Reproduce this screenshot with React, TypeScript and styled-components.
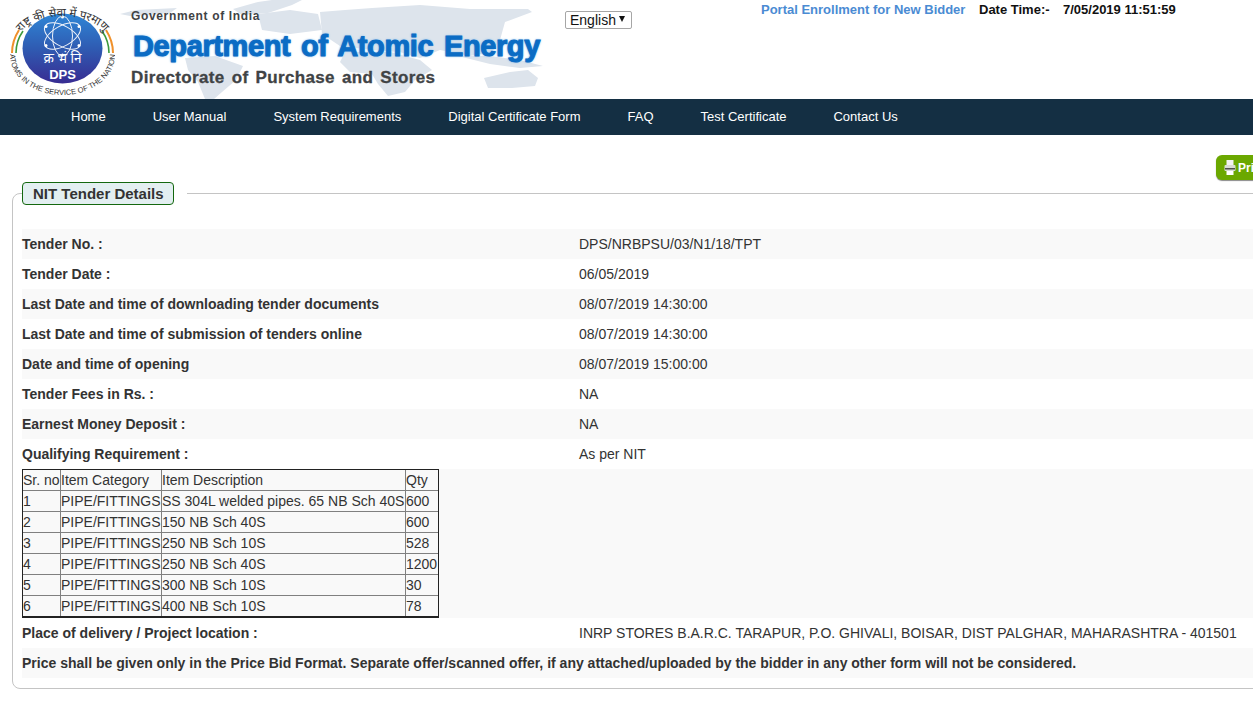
import * as React from "react";
import styled, { createGlobalStyle } from "styled-components";

const GlobalStyle = createGlobalStyle`
	html, body {
		margin: 0;
		padding: 0;
		background: #fff;
		overflow: hidden;
	}
	body {
		font-family: "Liberation Sans", Arial, sans-serif;
		font-size: 14px;
		color: #333;
	}
`;

const Page = styled.div`
	width: 1253px;
	height: 702px;
	overflow: hidden;
`;

const Header = styled.header`
	position: relative;
	display: flex;
	height: 99px;
	overflow: hidden;
`;

const MapArt = styled.svg`
	position: absolute;
	left: 110px;
	top: 0;
	width: 440px;
	height: 99px;
`;

const LogoBox = styled.div`
	position: relative;
	flex: 0 0 131px;
	padding: 3px 0 0 10px;
	box-sizing: border-box;
`;

const Brand = styled.div`
	position: relative;
	flex: 0 0 434px;
	padding-top: 9px;
	box-sizing: border-box;
`;

const GovLine = styled.div`
	font-size: 12px;
	line-height: 15px;
	font-weight: 700;
	letter-spacing: 0.65px;
	color: #3f4345;
`;

const DeptLine = styled.div`
	margin: 4px 0 0 2px;
	font-size: 29px;
	line-height: 36px;
	font-weight: 700;
	letter-spacing: -0.38px;
	word-spacing: 3px;
	white-space: nowrap;
	color: #0b6cc4;
	-webkit-text-stroke: 1px #0b6cc4;
	text-shadow: 0 0 1px #7fb8ea, 0 0 2px #7fb8ea, 0 0 3px #9ccbf0;
`;

const DirLine = styled.div`
	margin-top: 4px;
	font-size: 17px;
	line-height: 20px;
	font-weight: 700;
	letter-spacing: 0.35px;
	word-spacing: 2px;
	white-space: nowrap;
	color: #3f4345;
	-webkit-text-stroke: 0.3px #3f4345;
`;

const LangWrap = styled.div`
	position: relative;
	flex: 0 0 196px;
	padding-top: 11px;
	box-sizing: border-box;
	&::after {
		content: "";
		position: absolute;
		left: 54px;
		top: 16px;
		border-left: 3px solid transparent;
		border-right: 3px solid transparent;
		border-top: 6px solid #111;
	}
`;

const LangSelect = styled.select`
	appearance: none;
	display: block;
	width: 67px;
	height: 18px;
	padding: 0 0 0 4px;
	border: 1px solid #a6a6a6;
	border-radius: 2px;
	background: #fff;
	font: 14px "Liberation Sans", Arial, sans-serif;
	color: #111;
`;

const TopInfo = styled.div`
	display: flex;
	align-items: flex-start;
	padding-top: 2px;
	font-size: 13px;
	line-height: 15px;
	font-weight: 700;
	white-space: nowrap;
	color: #111;
`;

const EnrollLink = styled.a`
	width: 218px;
	color: #4a8bd3;
	text-decoration: none;
`;

const DateLabel = styled.span`
	width: 84px;
`;

const Nav = styled.nav`
	display: flex;
	align-items: center;
	gap: 47px;
	height: 36px;
	padding: 0 0 2px 71px;
	box-sizing: border-box;
	background: #142f43;
`;

const NavLink = styled.a`
	font-size: 13px;
	color: #fff;
	text-decoration: none;
	white-space: nowrap;
`;

const Main = styled.main`
	width: 1300px;
	padding: 20px 0 0 12px;
	box-sizing: border-box;
`;

const PrintRow = styled.div`
	display: flex;
	height: 25px;
	padding-left: 1204px;
`;

const PrintButton = styled.button`
	display: flex;
	align-items: center;
	gap: 2px;
	width: 70px;
	height: 25px;
	padding: 0 0 0 8px;
	border: 0;
	border-radius: 6px;
	background: #6ba800;
	box-shadow: 0 1px 1px #8a8a8a;
	font: 700 12px "Liberation Sans", Arial, sans-serif;
	color: #fff;
`;

const Details = styled.fieldset`
	margin: 2px 0 0;
	padding: 24px 0 10px 9px;
	min-width: 0;
	width: 1270px;
	box-sizing: border-box;
	border: 1px solid #c4c4c4;
	border-radius: 8px;
`;

const Title = styled.legend`
	margin: 0;
	padding: 0 13px 0 0;
`;

const TitleChip = styled.div`
	height: 23px;
	padding: 0 9px 0 10px;
	box-sizing: border-box;
	border: 1px solid #14680f;
	border-radius: 4px;
	background: #e3eff1;
	font-size: 15px;
	line-height: 21px;
	font-weight: 700;
	color: #333;
`;

const Row = styled.div<{ $shaded: boolean; $tall?: boolean }>`
	display: grid;
	grid-template-columns: 557px 1fr;
	align-items: center;
	height: ${(p) => (p.$tall ? "149px" : "30px")};
	background: ${(p) => (p.$shaded ? "#f9f9f9" : "#fff")};
`;

const Label = styled.div<{ $wide?: boolean }>`
	font-weight: 700;
	white-space: nowrap;
	${(p) => p.$wide && "grid-column: 1 / -1;"}
`;

const Value = styled.div`
	white-space: nowrap;
`;

const TableWrap = styled.div`
	grid-column: 1 / -1;
	align-self: start;
`;

const Items = styled.table`
	border-collapse: separate;
	border-spacing: 0;
	table-layout: fixed;
	width: 417px;
	border: 1px solid #222;
	border-bottom-width: 2px;
	font-size: 14px;
	line-height: 16px;
`;

const Column = styled.col<{ $width: number }>`
	width: ${(p) => p.$width}px;
`;

const Cell = styled.td`
	height: 21px;
	padding: 0;
	border-right: 1px solid #808080;
	border-bottom: 1px solid #808080;
	white-space: nowrap;
	box-sizing: border-box;
	&:last-child {
		border-right: 0;
	}
	tr:last-child > & {
		border-bottom: 0;
		height: 20px;
	}
`;

const PrinterIcon = () => (
	<svg width="12" height="17" viewBox="0 0 12 17">
		<rect x="2.5" y="1" width="7" height="5" fill="#f2f2f2" />
		<rect x="0.5" y="6" width="11" height="6" rx="1" fill="#d9dcd6" />
		<rect x="1" y="9" width="10" height="1.5" fill="#4d4f4d" />
		<rect x="2.5" y="12" width="7" height="4" fill="#fff" />
	</svg>
);

const WorldMap = () => (
	<MapArt viewBox="110 0 440 99">
		<g fill="#dde4ec">
			<path d="M120 14 L136 10 L177 8 L170 13 L150 15 L130 16 Z" />
			<path d="M233 9 L258 2 L272 0 L302 0 L292 5 L268 13 L242 15 Z" />
			<path d="M258 14 L290 10 L318 14 L322 30 L290 34 L262 30 Z" />
			<path d="M320 12 L345 10 L372 8 L420 5 L470 9 L528 9 L532 12 L505 22 L500 40 L492 52 L470 56 L440 50 L420 58 L400 52 L372 50 L340 46 L322 34 Z" />
			<path d="M185 58 L215 56 L243 66 L236 80 L222 92 L214 99 L205 99 L198 82 L188 70 Z" />
			<path d="M345 52 L390 52 L420 60 L432 70 L415 80 L405 92 L388 96 L378 84 L372 74 L350 72 L340 62 Z" />
			<path d="M458 56 L490 56 L520 60 L543 66 L520 68 L490 64 Z" />
			<path d="M484 78 L510 72 L528 70 L538 78 L535 86 L512 88 L488 88 Z" />
		</g>
	</MapArt>
);

const Logo = () => (
	<svg width="105" height="94" viewBox="0 0 105 94">
		<defs>
			<path id="topArc" d="M10 32 A43 22 0 0 1 95 32" />
			<path id="bottomArc" d="M0 52 A52.5 40 0 0 0 105 52" />
			<linearGradient id="disc" x1="0" y1="0" x2="0" y2="1">
				<stop offset="0%" stopColor="#2f86d6" />
				<stop offset="50%" stopColor="#2f5bb2" />
				<stop offset="100%" stopColor="#382c92" />
			</linearGradient>
		</defs>
		<ellipse cx="52.5" cy="45.5" rx="40" ry="35" fill="url(#disc)" />
		<g fill="none" stroke="#eef2fa" strokeWidth="1">
			<ellipse cx="52.5" cy="33" rx="10" ry="20" />
			<ellipse cx="52.5" cy="33" rx="10" ry="20" transform="rotate(60 52.5 33)" />
			<ellipse cx="52.5" cy="33" rx="10" ry="20" transform="rotate(-60 52.5 33)" />
		</g>
		<g fill="#fff">
			<circle cx="52.5" cy="14" r="1.5" />
			<circle cx="52.5" cy="52" r="1.5" />
			<circle cx="36" cy="23.5" r="1.5" />
			<circle cx="69" cy="23.5" r="1.5" />
			<circle cx="36" cy="42.5" r="1.5" />
			<circle cx="69" cy="42.5" r="1.5" />
		</g>
		<g fill="none" strokeWidth="2">
			<path d="M9 27 Q2 38 2 50" stroke="#f0902a" />
			<path d="M13 28 Q6 38 6 50" stroke="#3d9a3d" strokeWidth="1.6" />
			<path d="M96 27 Q103 38 103 50" stroke="#f0902a" />
			<path d="M92 28 Q99 38 99 50" stroke="#3d9a3d" strokeWidth="1.6" />
		</g>
		<text fontSize="11.5" fill="#333" fontFamily="Noto Sans, sans-serif">
			<textPath href="#topArc" startOffset="50%" textAnchor="middle">
				राष्ट्र की सेवा में परमाणु
			</textPath>
		</text>
		<text fontSize="7.5" fill="#333" fontFamily="Liberation Sans, sans-serif">
			<textPath href="#bottomArc" startOffset="50%" textAnchor="middle">
				ATOMS IN THE SERVICE OF THE NATION
			</textPath>
		</text>
		<text x="52.5" y="60" fontSize="13.5" fill="#fff" textAnchor="middle" fontFamily="Noto Sans, sans-serif">
			क्र भं नि
		</text>
		<text x="52.5" y="76" fontSize="13" fontWeight="700" fill="#fff" textAnchor="middle" fontFamily="Liberation Sans, sans-serif">
			DPS
		</text>
	</svg>
);

const navItems = [
	"Home",
	"User Manual",
	"System Requirements",
	"Digital Certificate Form",
	"FAQ",
	"Test Certificate",
	"Contact Us",
];

const fields = [
	["Tender No. :", "DPS/NRBPSU/03/N1/18/TPT"],
	["Tender Date :", "06/05/2019"],
	["Last Date and time of downloading tender documents", "08/07/2019 14:30:00"],
	["Last Date and time of submission of tenders online", "08/07/2019 14:30:00"],
	["Date and time of opening", "08/07/2019 15:00:00"],
	["Tender Fees in Rs. :", "NA"],
	["Earnest Money Deposit :", "NA"],
	["Qualifying Requirement :", "As per NIT"],
];

const columnWidths = [38, 101, 244, 32];

const itemRows = [
	["Sr. no", "Item Category", "Item Description", "Qty"],
	["1", "PIPE/FITTINGS", "SS 304L welded pipes. 65 NB Sch 40S", "600"],
	["2", "PIPE/FITTINGS", "150 NB Sch 40S", "600"],
	["3", "PIPE/FITTINGS", "250 NB Sch 10S", "528"],
	["4", "PIPE/FITTINGS", "250 NB Sch 40S", "1200"],
	["5", "PIPE/FITTINGS", "300 NB Sch 10S", "30"],
	["6", "PIPE/FITTINGS", "400 NB Sch 10S", "78"],
];

export default function App() {
	return (
		<Page>
			<GlobalStyle />
			<Header>
				<WorldMap />
				<LogoBox>
					<Logo />
				</LogoBox>
				<Brand>
					<GovLine>Government of India</GovLine>
					<DeptLine>Department of Atomic Energy</DeptLine>
					<DirLine>Directorate of Purchase and Stores</DirLine>
				</Brand>
				<LangWrap>
					<LangSelect defaultValue="English">
						<option>English</option>
					</LangSelect>
				</LangWrap>
				<TopInfo>
					<EnrollLink href="#">Portal Enrollment for New Bidder</EnrollLink>
					<DateLabel>Date Time:-</DateLabel>
					<span>7/05/2019 11:51:59</span>
				</TopInfo>
			</Header>
			<Nav>
				{navItems.map((item) => (
					<NavLink href="#" key={item}>
						{item}
					</NavLink>
				))}
			</Nav>
			<Main>
				<PrintRow>
					<PrintButton>
						<PrinterIcon />
						Print
					</PrintButton>
				</PrintRow>
				<Details>
					<Title>
						<TitleChip>NIT Tender Details</TitleChip>
					</Title>
					{fields.map(([label, value], i) => (
						<Row $shaded={i % 2 === 0} key={label}>
							<Label>{label}</Label>
							<Value>{value}</Value>
						</Row>
					))}
					<Row $shaded $tall>
						<TableWrap>
							<Items>
								<colgroup>
									{columnWidths.map((w, i) => (
										<Column $width={w} key={i} />
									))}
								</colgroup>
								<tbody>
									{itemRows.map((cells) => (
										<tr key={cells[0]}>
											{cells.map((cell, i) => (
												<Cell key={i}>{cell}</Cell>
											))}
										</tr>
									))}
								</tbody>
							</Items>
						</TableWrap>
					</Row>
					<Row $shaded={false}>
						<Label>Place of delivery / Project location :</Label>
						<Value>INRP STORES B.A.R.C. TARAPUR, P.O. GHIVALI, BOISAR, DIST PALGHAR, MAHARASHTRA - 401501</Value>
					</Row>
					<Row $shaded>
						<Label $wide>
							Price shall be given only in the Price Bid Format. Separate offer/scanned offer, if any attached/uploaded by the bidder in any other form will not be considered.
						</Label>
					</Row>
				</Details>
			</Main>
		</Page>
	);
}
